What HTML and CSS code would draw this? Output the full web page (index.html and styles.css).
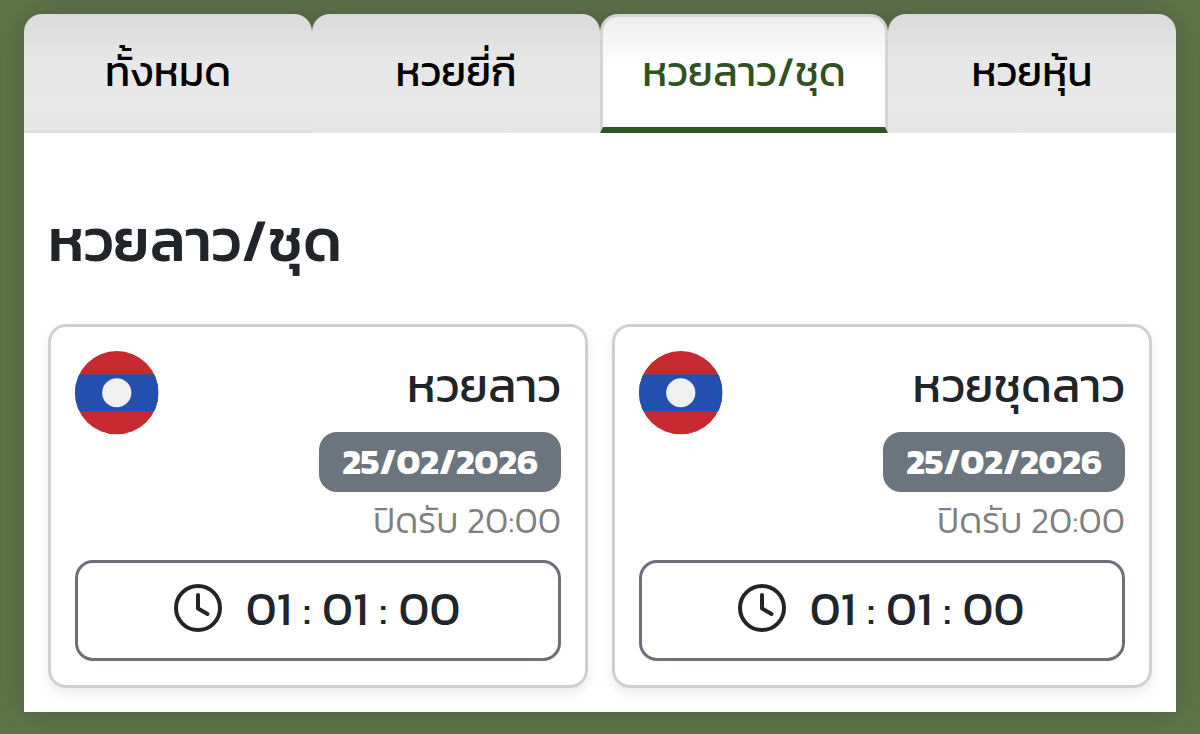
FILE: index.html
```html
<!DOCTYPE html>
<html lang="th">
<head>
  <meta charset="UTF-8">
  <meta name="viewport" content="width=device-width, initial-scale=1.0">
  <title>หวยลาว/ชุด</title>
  <link rel="stylesheet" href="styles.css">
</head>
<body>
  <div class="lotto-container">
    <nav class="tabs">
      <a class="tab first">ทั้งหมด</a>
      <a class="tab">หวยยี่กี</a>
      <a class="tab active">หวยลาว/ชุด</a>
      <a class="tab">หวยหุ้น</a>
    </nav>

    <div class="tab-content">
      <h3>หวยลาว/ชุด</h3>
      <div class="lotto-list">
        <div class="lotto-card">
          <div class="card-top">
            <svg class="flag" viewBox="0 0 84 84">
              <clipPath id="flag-a"><circle cx="42" cy="42" r="42"/></clipPath>
              <g clip-path="url(#flag-a)">
                <rect width="84" height="84" fill="#c72931"/>
                <rect y="23.5" width="84" height="37" fill="#2350ae"/>
              </g>
              <circle cx="42" cy="42" r="14.7" fill="#f0f0f0"/>
            </svg>
            <div class="card-info">
              <div class="lotto-name">หวยลาว</div>
              <span class="badge">25/02/2026</span>
              <div class="close-time">ปิดรับ 20:00</div>
            </div>
          </div>
          <div class="countdown">
            <svg class="clock" viewBox="0 0 48 48">
              <circle cx="24" cy="24" r="22"/>
              <path d="M24 11v13.5l9.5 5.5"/>
            </svg>
            <span class="time">01 <i>:</i> 01 <i>:</i> 00</span>
          </div>
        </div>

        <div class="lotto-card">
          <div class="card-top">
            <svg class="flag" viewBox="0 0 84 84">
              <clipPath id="flag-b"><circle cx="42" cy="42" r="42"/></clipPath>
              <g clip-path="url(#flag-b)">
                <rect width="84" height="84" fill="#c72931"/>
                <rect y="23.5" width="84" height="37" fill="#2350ae"/>
              </g>
              <circle cx="42" cy="42" r="14.7" fill="#f0f0f0"/>
            </svg>
            <div class="card-info">
              <div class="lotto-name">หวยชุดลาว</div>
              <span class="badge">25/02/2026</span>
              <div class="close-time">ปิดรับ 20:00</div>
            </div>
          </div>
          <div class="countdown">
            <svg class="clock" viewBox="0 0 48 48">
              <circle cx="24" cy="24" r="22"/>
              <path d="M24 11v13.5l9.5 5.5"/>
            </svg>
            <span class="time">01 <i>:</i> 01 <i>:</i> 00</span>
          </div>
        </div>
      </div>
    </div>
  </div>
</body>
</html>
```
FILE: styles.css
```css
* {
  box-sizing: border-box;
  margin: 0;
  padding: 0;
}
body {
  font-family: 'Kanit', 'Noto Sans Thai', 'Noto Sans', sans-serif;
  font-weight: 400;
  color: #212529;
  height: 734px;
  overflow: hidden;
  background: #5e7648;
  padding: 14px 24px 22px;
}
.lotto-container {
  height: 698px;
  border-radius: 18px 18px 0 0;
  box-shadow: 0 0 36px 3px rgba(60, 50, 60, 0.35);
}

/* Tabs */
.tabs {
  display: grid;
  grid-template-columns: repeat(4, 1fr);
  height: 119px;
  border-radius: 18px 18px 0 0;
  background: linear-gradient(#546841 30px, #fff 30px);
}
.tab {
  display: flex;
  align-items: center;
  justify-content: center;
  padding-bottom: 5px;
  font-size: 41.7px;
  color: #000;
  border-radius: 18px 18px 0 0;
  background: linear-gradient(#d9dad9, #e7e7e7 42%, #e9e9e9 80%, #e5e6e5);
}
.tab.first {
  border-bottom: 3px solid #dcdee1;
  padding-bottom: 2px;
}
.tab.active {
  color: #305221;
  border: 3px solid #d3d4d8;
  border-bottom: 6px solid #2f5522;
  padding-bottom: 2px;
  background: linear-gradient(#eeeeee, #fff 45%);
}

.tab-content {
  height: 579px;
  padding: 72px 24px 0;
  background: #fff;
}
h3 {
  font-size: 59.5px;
  font-weight: 500;
  line-height: 72px;
  margin-bottom: 47px;
}

/* Cards */
.lotto-list {
  display: grid;
  grid-template-columns: 1fr 1fr;
  gap: 24px;
}
.lotto-card {
  height: 364px;
  padding: 24px;
  border: 3px solid #d0d0d0;
  border-radius: 18px;
  box-shadow: 0 6px 12px rgba(0, 0, 0, 0.08);
}
.card-top {
  display: flex;
  justify-content: space-between;
  height: 209px;
}
.flag {
  width: 83.5px;
  height: 83.5px;
}
.card-info {
  display: flex;
  flex-direction: column;
  align-items: flex-end;
}
.lotto-name {
  font-size: 47.7px;
  line-height: 69px;
  margin-bottom: 12px;
}
.badge {
  height: 60px;
  padding: 0 23px;
  border-radius: 18px;
  background: #6c757d;
  color: #fff;
  font-size: 35.7px;
  font-weight: 700;
  line-height: 59px;
}
.close-time {
  color: #808080;
  font-size: 36px;
  font-weight: 300;
  line-height: 54px;
  margin-top: 1px;
}
.countdown {
  display: flex;
  align-items: center;
  justify-content: center;
  gap: 24px;
  height: 101px;
  padding-right: 2px;
  border: 3px solid #6c7078;
  border-radius: 18px;
}
.clock {
  width: 48px;
  height: 48px;
  margin-top: -5px;
  fill: none;
  stroke: #212529;
  stroke-width: 4;
  stroke-linecap: round;
  stroke-linejoin: round;
}
.time {
  font-size: 47.5px;
  margin-top: -4px;
}
.time i {
  font-style: normal;
}
```
